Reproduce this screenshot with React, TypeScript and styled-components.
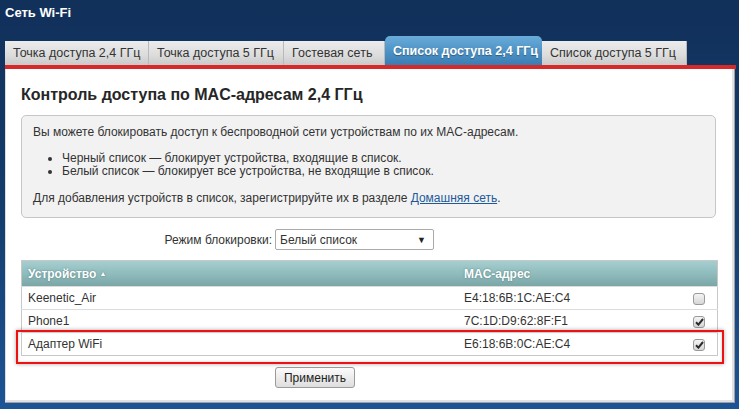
import React from "react";
import styled, { createGlobalStyle } from "styled-components";

const Global = createGlobalStyle`
  html, body { margin: 0; padding: 0; }
  body {
    width: 739px;
    height: 409px;
    overflow: hidden;
    font-family: "Liberation Sans", Arial, sans-serif;
    background: linear-gradient(to bottom, #11305a 0%, #143c6c 50%, #1d5496 100%);
  }
`;

const Page = styled.div`
  display: flex;
  flex-direction: column;
  height: 409px;
`;

const Title = styled.div`
  color: #fff;
  font-weight: bold;
  font-size: 13px;
  line-height: 18px;
  padding: 4px 5px 0;
  height: 37px;
  box-sizing: border-box;
`;

const TabRow = styled.div`
  display: flex;
  align-items: flex-end;
  height: 29px;
  padding-left: 5px;
`;

const Tab = styled.div<{ $active?: boolean; $w: number }>`
  box-sizing: border-box;
  width: ${(p) => p.$w}px;
  height: ${(p) => (p.$active ? "29px" : "24px")};
  padding: 0 0 0 8px;
  display: flex;
  align-items: center;
  font-size: 12.5px;
  white-space: nowrap;
  color: ${(p) => (p.$active ? "#fff" : "#333")};
  font-weight: ${(p) => (p.$active ? "bold" : "normal")};
  border-radius: ${(p) => (p.$active ? "5px 5px 0 0" : "0")};
  background: ${(p) =>
    p.$active
      ? "linear-gradient(to bottom, #69acd9 0%, #4a8fc4 60%, #3b7db3 100%)"
      : "linear-gradient(to bottom, #ececec 0%, #dcdcdc 60%, #c9c9c9 100%)"};
  border-right: ${(p) => (p.$active ? "none" : "1px solid #b9b9b9")};
  text-shadow: ${(p) => (p.$active ? "0 1px 1px rgba(0,0,0,0.35)" : "none")};
`;

const RedBar = styled.div`
  height: 4px;
  margin: 0 3px 0 5px;
  background: #d62a2a;
`;

const Panel = styled.div`
  position: relative;
  flex: 1;
  margin: 0 4px 6px 5px;
  background: #fff;
  padding: 16px 16px 15px 16px;
  box-shadow: inset -1px -1px 0 #a0a0a0, inset -3px -3px 0 #e2e2e2, inset 1px 0 0 #dcdcdc;
`;

const Heading = styled.h1`
  margin: 0;
  font-size: 16px;
  line-height: 20px;
  font-weight: bold;
  color: #262626;
`;

const InfoBox = styled.div`
  margin-top: 10px;
  background: #f2f2f2;
  border: 1px solid #c6c6c6;
  border-radius: 5px;
  padding: 8px 11px 11px;
  font-size: 12px;
  color: #333;
  width: 695px;
  box-sizing: border-box;
`;

const Para = styled.p`
  margin: 0;
  line-height: 16px;
`;

const List = styled.ul`
  margin: 12px 0;
  padding-left: 29px;
  line-height: 13px;
`;

const Link = styled.a`
  color: #1d5a9a;
  text-decoration: underline;
`;

const ModeRow = styled.div`
  display: flex;
  align-items: center;
  margin-top: 11px;
  gap: 3px;
  font-size: 12px;
  color: #333;
`;

const ModeLabel = styled.label`
  width: 251px;
  text-align: right;
`;

const Select = styled.div`
  box-sizing: border-box;
  width: 159px;
  height: 21px;
  border: 1px solid #aaa;
  border-radius: 2px;
  background: #fff;
  display: flex;
  align-items: center;
  justify-content: space-between;
  padding: 0 7px 0 4px;
  font-size: 12px;
  color: #333;
`;

const Arrow = styled.span`
  font-size: 9px;
  color: #222;
`;

const Table = styled.table`
  margin-top: 10px;
  width: 697px;
  border-collapse: collapse;
  border: 1px solid #c8c8c8;
  font-size: 12px;
  color: #333;
`;

const HeadRow = styled.tr`
  background: linear-gradient(to bottom, #a5cecf 0%, #8fbbbc 50%, #79a4a5 100%);
  height: 26px;
`;

const Th = styled.th<{ $w?: number }>`
  text-align: left;
  color: #fff;
  font-weight: bold;
  padding: 0 6px;
  text-shadow: 0 0 2px rgba(40, 80, 80, 0.6);
  width: ${(p) => (p.$w ? `${p.$w}px` : "auto")};
`;

const SortMark = styled.span`
  font-size: 7px;
  margin-left: 3px;
  vertical-align: 2px;
`;

const Row = styled.tr`
  height: 23px;
  border-top: 1px solid #dcdcdc;
`;

const Td = styled.td`
  padding: 0 6px;
  text-align: left;
  line-height: 14px;
`;

const CheckBox = styled.span`
  display: inline-flex;
  align-items: center;
  justify-content: center;
  width: 12px;
  height: 12px;
  box-sizing: border-box;
  border: 1px solid #9a9a9a;
  border-radius: 3px;
  background: linear-gradient(to bottom, #f4f4f4, #d6d6d6);
  vertical-align: middle;
  margin-left: 8px;
`;

const Highlight = styled.div`
  position: absolute;
  left: 11px;
  top: 261px;
  width: 708px;
  height: 34px;
  box-sizing: border-box;
  border: 2px solid #ee1111;
  box-shadow: 0 0 4px rgba(0, 0, 0, 0.35), inset 0 0 3px rgba(0, 0, 0, 0.2);
  pointer-events: none;
`;

const ButtonRow = styled.div`
  margin-top: 11px;
  padding-left: 254px;
`;

const Button = styled.button`
  box-sizing: border-box;
  height: 21px;
  width: 80px;
  font-family: "Liberation Sans", Arial, sans-serif;
  font-size: 12px;
  color: #222;
  border: 1px solid #9a9a9a;
  border-radius: 3px;
  background: linear-gradient(to bottom, #fbfbfb, #dedede);
  padding: 0;
`;

const Check = () => (
  <svg width="9" height="8" viewBox="0 0 9 8">
    <path d="M1 4.2 L3.4 6.6 L8 1" fill="none" stroke="#2a2a2a" strokeWidth="2" />
  </svg>
);

const tabs = [
  { label: "Точка доступа 2,4 ГГц", w: 144 },
  { label: "Точка доступа 5 ГГц", w: 135 },
  { label: "Гостевая сеть", w: 101 },
  { label: "Список доступа 2,4 ГГц", w: 157 },
  { label: "Список доступа 5 ГГц", w: 145 },
];

const devices = [
  { name: "Keenetic_Air", mac: "E4:18:6B:1C:AE:C4", checked: false },
  { name: "Phone1", mac: "7C:1D:D9:62:8F:F1", checked: true },
  { name: "Адаптер WiFi", mac: "E6:18:6B:0C:AE:C4", checked: true },
];

export default function App() {
  return (
    <>
      <Global />
      <Page>
        <Title>Сеть Wi-Fi</Title>
        <TabRow>
          {tabs.map((t, i) => (
            <Tab key={t.label} $w={t.w} $active={i === 3}>
              {t.label}
            </Tab>
          ))}
        </TabRow>
        <RedBar />
        <Panel>
          <Heading>Контроль доступа по MAC-адресам 2,4 ГГц</Heading>
          <InfoBox>
            <Para>
              Вы можете блокировать доступ к беспроводной сети устройствам по их MAC-адресам.
            </Para>
            <List>
              <li>Черный список — блокирует устройства, входящие в список.</li>
              <li>Белый список — блокирует все устройства, не входящие в список.</li>
            </List>
            <Para>
              Для добавления устройств в список, зарегистрируйте их в разделе{" "}
              <Link href="#">Домашняя сеть</Link>.
            </Para>
          </InfoBox>
          <ModeRow>
            <ModeLabel>Режим блокировки:</ModeLabel>
            <Select>
              <span>Белый список</span>
              <Arrow>▼</Arrow>
            </Select>
          </ModeRow>
          <Table>
            <thead>
              <HeadRow>
                <Th $w={424}>
                  Устройство<SortMark>▲</SortMark>
                </Th>
                <Th>MAC-адрес</Th>
                <Th $w={26}></Th>
              </HeadRow>
            </thead>
            <tbody>
              {devices.map((d) => (
                <Row key={d.mac}>
                  <Td>{d.name}</Td>
                  <Td>{d.mac}</Td>
                  <Td>
                    <CheckBox>{d.checked && <Check />}</CheckBox>
                  </Td>
                </Row>
              ))}
            </tbody>
          </Table>
          <ButtonRow>
            <Button>Применить</Button>
          </ButtonRow>
          <Highlight />
        </Panel>
      </Page>
    </>
  );
}
